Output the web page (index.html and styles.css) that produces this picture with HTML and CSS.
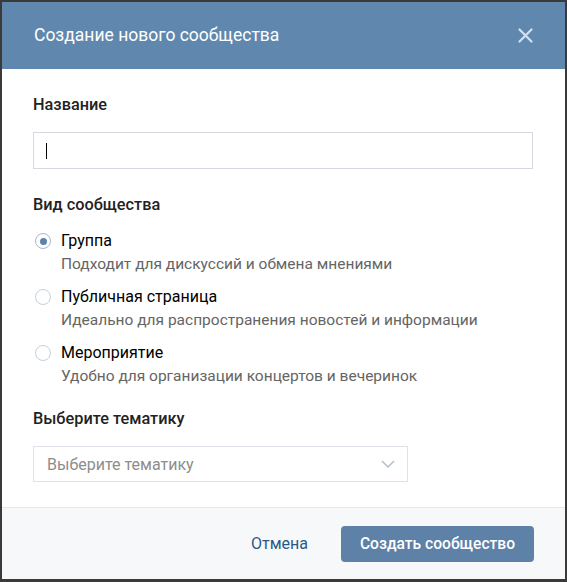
FILE: index.html
```html
<!DOCTYPE html>
<html lang="ru">
<head>
    <meta charset="UTF-8">
    <title>Создание нового сообщества</title>
    <link rel="stylesheet" href="styles.css">
</head>
<body>

    <!-- Modal: create community -->
    <div class="modal">
        <div class="modal-header">
            <div class="modal-title">Создание нового сообщества</div>
            <div class="close-button">
                <svg width="15" height="15" viewBox="0 0 15 15">
                    <path d="M1.5 1.5 L13.5 13.5 M13.5 1.5 L1.5 13.5" stroke="#d5e0ec" stroke-width="2.2" stroke-linecap="round"/>
                </svg>
            </div>
        </div>

        <div class="modal-body">
            <div class="field-label">Название</div>
            <div class="text-input"><span class="caret"></span></div>

            <div class="field-label type-label">Вид сообщества</div>
            <div class="radio-list">
                <div class="radio-row">
                    <span class="radio checked"></span>
                    <div class="radio-text">
                        <div class="radio-title">Группа</div>
                        <div class="radio-desc">Подходит для дискуссий и обмена мнениями</div>
                    </div>
                </div>
                <div class="radio-row">
                    <span class="radio"></span>
                    <div class="radio-text">
                        <div class="radio-title">Публичная страница</div>
                        <div class="radio-desc">Идеально для распространения новостей и информации</div>
                    </div>
                </div>
                <div class="radio-row">
                    <span class="radio"></span>
                    <div class="radio-text">
                        <div class="radio-title">Мероприятие</div>
                        <div class="radio-desc">Удобно для организации концертов и вечеринок</div>
                    </div>
                </div>
            </div>

            <div class="field-label theme-label">Выберите тематику</div>
            <div class="select-box">
                <span class="placeholder">Выберите тематику</span>
                <svg width="14" height="8" viewBox="0 0 14 8">
                    <path d="M1 1 L7 7 L13 1" fill="none" stroke="#b4bfcc" stroke-width="1.5"/>
                </svg>
            </div>
        </div>

        <div class="modal-footer">
            <span class="cancel-link">Отмена</span>
            <button class="create-button">Создать сообщество</button>
        </div>
    </div>

</body>
</html>
```

FILE: styles.css
```css
body {
    margin: 0;
    padding: 2px;
    background-color: #3a3a3a;
    font-family: Roboto, "Open Sans", Arial, sans-serif;
    font-size: 15.5px;
    color: #000;
}

/* Modal box */
.modal {
    width: 563px;
    height: 577px;
    background-color: #ffffff;
    display: flex;
    flex-direction: column;
}

.modal-header {
    height: 67px;
    background-color: #6088af;
    display: flex;
    align-items: center;
    justify-content: space-between;
    padding: 0 32px 0 32px;
}
.modal-title {
    color: #ffffff;
    font-size: 17.5px;
    margin-top: -1px;
}
.close-button {
    width: 15px;
    height: 15px;
    display: flex;
}

.modal-body {
    flex-grow: 1;
    padding: 26px 32px 0 31px;
}
.field-label {
    font-size: 16.3px;
    font-weight: 500;
    line-height: 20px;
    color: #222;
}
.text-input {
    margin-top: 17px;
    height: 35px;
    border: 1px solid #d3d9de;
    display: flex;
    align-items: center;
    padding-left: 12px;
}
.caret {
    width: 1px;
    height: 16px;
    background-color: #000;
}
.type-label {
    margin-top: 26px;
}

/* Radio list */
.radio-list {
    margin-top: 16px;
    display: flex;
    flex-direction: column;
    gap: 13px;
}
.radio-row {
    display: flex;
    align-items: flex-start;
}
.radio {
    width: 14px;
    height: 14px;
    border: 1px solid #c5d0db;
    border-radius: 50%;
    margin: 2px 10px 0 2px;
    flex-shrink: 0;
    display: flex;
    align-items: center;
    justify-content: center;
}
.radio.checked {
    border-color: #a4b8cf;
}
.radio.checked::after {
    content: "";
    width: 7px;
    height: 7px;
    border-radius: 50%;
    background-color: #5d81a8;
}
.radio-title {
    font-size: 16px;
    line-height: 20px;
    color: #000;
}
.radio-desc {
    margin-top: 3px;
    line-height: 20px;
    color: #656565;
}

.theme-label {
    margin-top: 23px;
}
.select-box {
    margin-top: 17px;
    width: 375px;
    height: 36px;
    border: 1px solid #dfe2e8;
    display: flex;
    align-items: center;
    justify-content: space-between;
    padding: 0 12px 0 13px;
    box-sizing: border-box;
}
.placeholder {
    font-size: 16px;
    color: #8d8d8d;
}

/* Footer */
.modal-footer {
    height: 71px;
    border-top: 1px solid #e7e8ec;
    background-color: #f7f8fa;
    display: flex;
    align-items: center;
    justify-content: flex-end;
    padding-right: 31px;
}
.cancel-link {
    font-size: 16px;
    color: #2a5885;
    margin-right: 33px;
}
.create-button {
    width: 193px;
    height: 36px;
    border: none;
    border-radius: 4px;
    background-color: #5e81a8;
    color: #ffffff;
    font-family: Roboto, "Open Sans", Arial, sans-serif;
    font-size: 15.6px;
    font-weight: 500;
}
```
